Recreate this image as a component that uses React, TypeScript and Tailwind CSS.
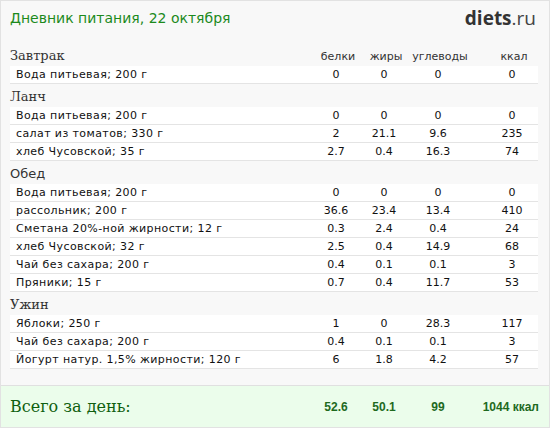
import React from 'react';

type Item = { name: string; p: string; f: string; c: string; k: string };
type Meal = { title: string; sans?: boolean; items: Item[] };

const meals: Meal[] = [
  {
    title: 'Завтрак',
    items: [{ name: 'Вода питьевая; 200 г', p: '0', f: '0', c: '0', k: '0' }],
  },
  {
    title: 'Ланч',
    items: [
      { name: 'Вода питьевая; 200 г', p: '0', f: '0', c: '0', k: '0' },
      { name: 'салат из томатов; 330 г', p: '2', f: '21.1', c: '9.6', k: '235' },
      { name: 'хлеб Чусовской; 35 г', p: '2.7', f: '0.4', c: '16.3', k: '74' },
    ],
  },
  {
    title: 'Обед',
    sans: true,
    items: [
      { name: 'Вода питьевая; 200 г', p: '0', f: '0', c: '0', k: '0' },
      { name: 'рассольник; 200 г', p: '36.6', f: '23.4', c: '13.4', k: '410' },
      { name: 'Сметана 20%-ной жирности; 12 г', p: '0.3', f: '2.4', c: '0.4', k: '24' },
      { name: 'хлеб Чусовской; 32 г', p: '2.5', f: '0.4', c: '14.9', k: '68' },
      { name: 'Чай без сахара; 200 г', p: '0.4', f: '0.1', c: '0.1', k: '3' },
      { name: 'Пряники; 15 г', p: '0.7', f: '0.4', c: '11.7', k: '53' },
    ],
  },
  {
    title: 'Ужин',
    items: [
      { name: 'Яблоки; 250 г', p: '1', f: '0', c: '28.3', k: '117' },
      { name: 'Чай без сахара; 200 г', p: '0.4', f: '0.1', c: '0.1', k: '3' },
      { name: 'Йогурт натур. 1,5% жирности; 120 г', p: '6', f: '1.8', c: '4.2', k: '57' },
    ],
  },
];

const sans = "font-['DejaVu_Sans',Verdana,sans-serif]";
const serif = "font-['DejaVu_Serif',Georgia,serif]";

const Cols: React.FC<{ p: string; f: string; c: string; k: string }> = ({ p, f, c, k }) => (
  <>
    <span className="w-[48px] text-center">{p}</span>
    <span className="w-[48px] text-center">{f}</span>
    <span className="w-[60px] text-center">{c}</span>
    <span className="ml-[18px] w-[52px] text-center">{k}</span>
  </>
);

export default function App() {
  return (
    <div className="w-[550px] h-[428px] bg-[#f8f8f8] border border-[#e2e2e2] flex flex-col overflow-hidden">
      <div className="flex items-center justify-between px-[9px] h-[34px]">
        <h1 className={`${sans} text-[14px] text-[#1c8a1c] leading-none`}>Дневник питания, 22 октября</h1>
        <div className="font-['Open_Sans',sans-serif] text-[19px] leading-none text-[#333] mr-[4px]">
          <span className="font-bold">diets</span>
          <span className="text-[#444]">.ru</span>
        </div>
      </div>

      <div className="px-[9px] flex-1">
        {meals.map((meal, i) => (
          <div key={meal.title} className={i === 0 ? 'mt-[11px]' : 'mt-[3px]'}>
            <div className="flex items-end h-[20px] pb-[4px]">
              <span className={`flex-1 text-[13px] leading-none text-[#333] ${meal.sans ? sans : serif}`}>
                {meal.title}
              </span>
              {i === 0 && (
                <div className={`${sans} text-[11px] text-[#333] flex leading-none`}>
                  <Cols p="белки" f="жиры" c="углеводы" k="ккал" />
                </div>
              )}
            </div>
            <div className="w-[528px]">
              {meal.items.map((it, j) => (
                <div
                  key={j}
                  className={`${sans} flex items-center h-[18px] bg-white border-b border-[#e4e4e4] text-[11px] text-[#111] leading-none`}
                >
                  <span className="flex-1 pl-[6px] tracking-[0.4px]">{it.name}</span>
                  <Cols p={it.p} f={it.f} c={it.c} k={it.k} />
                </div>
              ))}
            </div>
          </div>
        ))}
      </div>

      <div className="h-[42px] bg-[#ebfdeb] border-t border-[#e0e0e0] flex items-center px-[9px]">
        <span className={`${serif} flex-1 text-[16px] text-[#0f5f0f]`}>Всего за день:</span>
        <div className="flex w-[228px] font-['Liberation_Sans',Arial,sans-serif] font-bold text-[12px] text-[#1e6a1e]">
          <span className="w-[48px] text-center">52.6</span>
          <span className="w-[48px] text-center">50.1</span>
          <span className="w-[60px] text-center">99</span>
          <span className="flex-1 text-right pr-[1px]">1044 ккал</span>
        </div>
      </div>
    </div>
  );
}
